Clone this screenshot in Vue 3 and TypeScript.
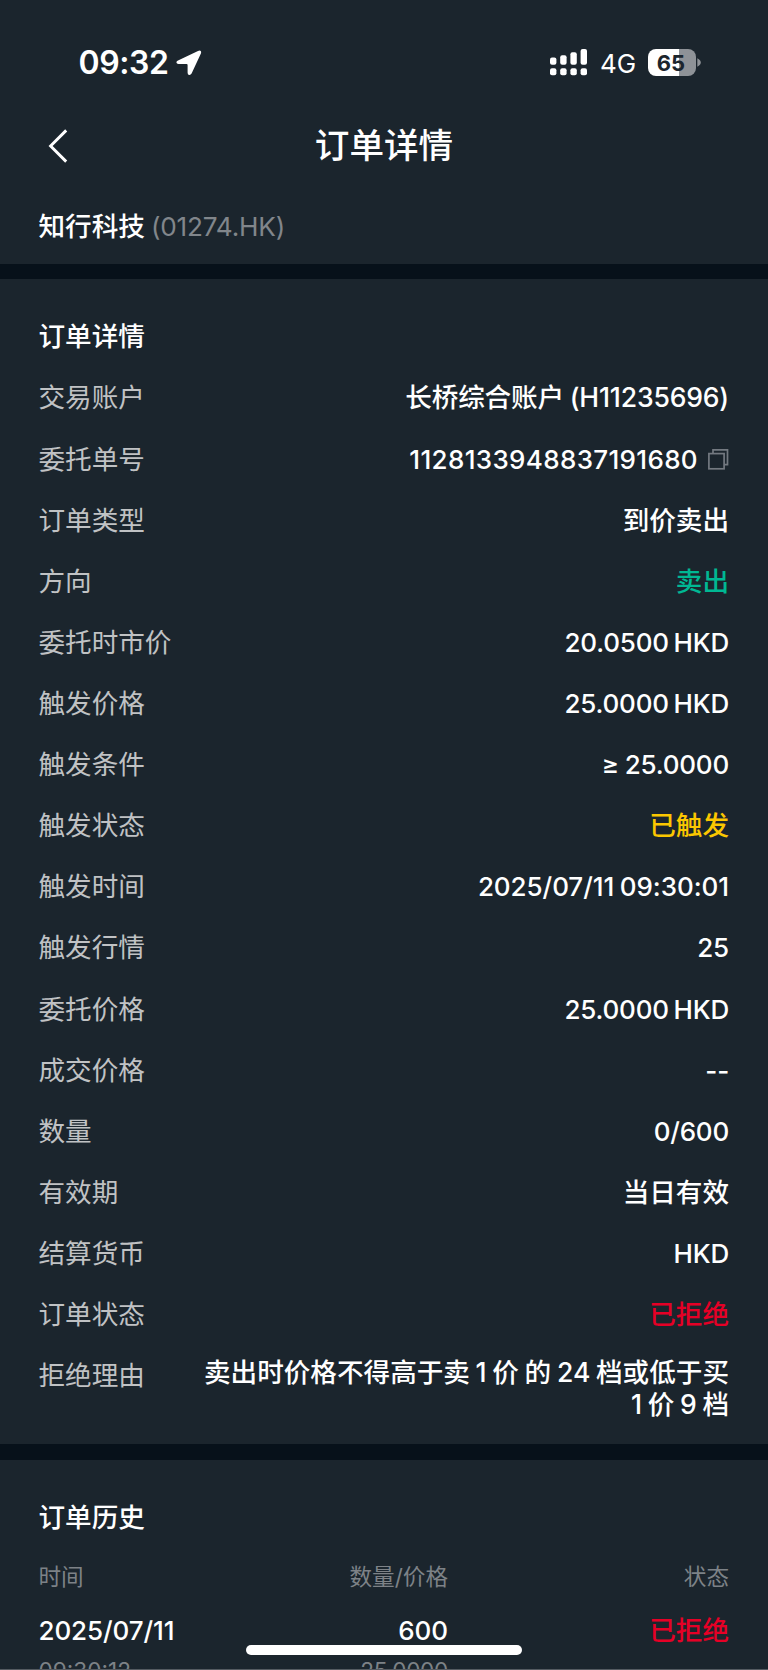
<script setup lang="ts">
interface Row {
  label: string
  value: string
  tone?: string
  kind?: string
  copy?: boolean
}

const rows: Row[] = [
  { label: '交易账户', value: '长桥综合账户 (H11235696)', kind: 'account' },
  { label: '委托单号', value: '1128133948837191680', kind: 'serial', copy: true },
  { label: '订单类型', value: '到价卖出', kind: 'han' },
  { label: '方向', value: '卖出', tone: 'green', kind: 'han' },
  { label: '委托时市价', value: '20.0500 HKD', kind: 'latin' },
  { label: '触发价格', value: '25.0000 HKD', kind: 'latin' },
  { label: '触发条件', value: '≥ 25.0000', kind: 'latin condition' },
  { label: '触发状态', value: '已触发', tone: 'yellow', kind: 'han' },
  { label: '触发时间', value: '2025/07/11 09:30:01', kind: 'latin datetime' },
  { label: '触发行情', value: '25', kind: 'latin' },
  { label: '委托价格', value: '25.0000 HKD', kind: 'latin' },
  { label: '成交价格', value: '--', kind: 'latin' },
  { label: '数量', value: '0/600', kind: 'latin' },
  { label: '有效期', value: '当日有效', kind: 'han' },
  { label: '结算货币', value: 'HKD', kind: 'latin' },
  { label: '订单状态', value: '已拒绝', tone: 'red', kind: 'han' },
]

const reasonLines: string[] = ['卖出时价格不得高于卖 1 价 的 24 档或低于买', '1 价 9 档']
</script>

<template>
  <div class="screen">
    <header class="top">
      <div class="status">
        <div class="status-left">
          <span class="clock">09:32</span>
          <svg class="location" width="26" height="26" viewBox="0 0 26 26">
            <path d="M2 10.4 L22 0.9 Q26 -0.4 24.9 3.6 L15.6 23.6 Q14.6 25.3 13 25 Q11.6 24.6 11.6 22.8 V14.9 Q11.6 13.9 10.6 13.9 H2.4 Q0.6 13.8 0.4 12.4 Q0.4 11.1 2 10.4Z" fill="#fff" />
          </svg>
        </div>
        <div class="status-right">
          <svg class="signal" width="38" height="27" viewBox="0 0 38 27" fill="#fff">
            <rect x="0" y="8.4" width="6.4" height="7.4" rx="2" />
            <rect x="10.2" y="6.2" width="6.4" height="9.6" rx="2" />
            <rect x="20.4" y="3.2" width="6.4" height="12.6" rx="2" />
            <rect x="30.6" y="0" width="6.4" height="15.8" rx="2" />
            <rect x="0" y="19.2" width="6.4" height="7" rx="2" />
            <rect x="10.2" y="19.2" width="6.4" height="7" rx="2" />
            <rect x="20.4" y="19.2" width="6.4" height="7" rx="2" />
            <rect x="30.6" y="19.2" width="6.4" height="7" rx="2" />
          </svg>
          <span class="network">4G</span>
          <div class="battery"><span>65</span></div>
          <svg class="battery-cap" width="4" height="9" viewBox="0 0 4 9">
            <path d="M0.3 0.3 Q3.8 2 3.8 4.5 T0.3 8.7Z" fill="#8e9297" />
          </svg>
        </div>
      </div>
      <nav class="nav">
        <svg class="back" width="20" height="34" viewBox="0 0 20 34">
          <path d="M18.2 1.4 L2.6 17 L18.2 32.6" fill="none" stroke="#fff" stroke-width="2.9" />
        </svg>
        <h1>订单详情</h1>
      </nav>
      <div class="stock">
        <span class="stock-name">知行科技</span>
        <span class="stock-code">(01274.HK)</span>
      </div>
    </header>

    <section class="details">
      <h2>订单详情</h2>
      <div v-for="row in rows" :key="row.label" class="row">
        <span class="label">{{ row.label }}</span>
        <span class="value" :class="[row.tone, row.kind]">{{ row.value }}</span>
        <svg v-if="row.copy" class="copy" width="21" height="21" viewBox="0 0 21 21" fill="none" stroke="#737980" stroke-width="1.7">
          <rect x="0.9" y="4.6" width="15.2" height="15.2" />
          <path d="M5 4.6 V0.9 H19.5 V15.6 H16.1" />
        </svg>
      </div>
      <div class="row reason">
        <span class="label">拒绝理由</span>
        <div class="reason-text">
          <span v-for="line in reasonLines" :key="line">{{ line }}</span>
        </div>
      </div>
    </section>

    <section class="history">
      <h2>订单历史</h2>
      <div class="grid head">
        <span>时间</span><span>数量/价格</span><span>状态</span>
      </div>
      <div class="grid entry">
        <span>2025/07/11</span><span>600</span><span class="red han">已拒绝</span>
      </div>
      <div class="grid sub">
        <span>09:30:12</span><span>25.0000</span><span></span>
      </div>
      <div class="home"></div>
    </section>
  </div>
</template>

<style>
html,
body {
  margin: 0;
  background: #1b252d;
}
</style>

<style scoped>
.screen {
  width: 768px;
  height: 1670px;
  overflow: hidden;
  box-sizing: border-box;
  border-bottom: 1px solid #555b61;
  background: #1b252d;
  color: #fff;
  font-family: Inter, "Noto Sans CJK SC", sans-serif;
  font-size: 26.6px;
  white-space: nowrap;
}
h1,
h2 {
  margin: 0;
  font-weight: 500;
}
.top {
  height: 264px;
  border-bottom: 15px solid #07111a;
}
.status {
  display: flex;
  justify-content: space-between;
  height: 108px;
  padding: 17px 67px 0 78.5px;
  box-sizing: border-box;
}
.status-left,
.status-right {
  display: flex;
  align-items: center;
}
.clock {
  width: 90.5px;
  font-size: 32px;
  font-weight: 600;
  letter-spacing: -0.4px;
}
.location {
  margin-left: 7px;
}
.network {
  width: 36px;
  margin: 1px 12px 0 12px;
  font-size: 26px;
}
.battery {
  display: flex;
  align-items: center;
  justify-content: center;
  width: 48px;
  height: 27px;
  border-radius: 8px;
  background: linear-gradient(90deg, #fff 65%, #8e9297 65%);
  color: #1b252d;
  font-size: 22px;
  font-weight: 700;
}
.battery span {
  margin-right: 2px;
}
.battery-cap {
  margin-left: 1px;
}
.nav {
  display: grid;
  grid-template-columns: 48px 1fr 48px;
  align-items: center;
  height: 74px;
  padding: 0 48px;
}
.back {
  margin-top: 1px;
}
h1 {
  grid-column: 2;
  text-align: center;
  font-size: 34.6px;
  line-height: 74px;
}
.stock {
  display: flex;
  align-items: center;
  gap: 6px;
  height: 88px;
  padding-left: 38.5px;
}
.stock-name {
  padding-bottom: 4px;
  font-weight: 500;
}
.stock-code {
  color: #81868b;
  font-size: 26.2px;
  letter-spacing: -0.2px;
}
.details {
  height: 1165px;
  padding: 27px 39px 0 38.5px;
  box-sizing: border-box;
}
h2 {
  height: 61.4px;
  line-height: 60.4px;
  font-size: 26.6px;
}
.row {
  display: flex;
  align-items: center;
  height: 61.12px;
}
.label {
  flex: 1;
  padding-bottom: 4px;
  color: #c0c2c4;
}
.value,
.reason-text {
  font-weight: 450;
}
.value.han,
.account {
  padding-bottom: 4px;
}
.account {
  word-spacing: -1px;
  letter-spacing: -0.18px;
}
.serial {
  font-size: 26px;
  letter-spacing: 0.34px;
}
.latin {
  font-size: 26px;
  letter-spacing: -0.2px;
  word-spacing: -2px;
}
.condition {
  word-spacing: -1px;
}
.datetime {
  letter-spacing: -0.05px;
  word-spacing: -1.3px;
}
.copy {
  margin-left: 10px;
}
.green {
  color: #00b893;
}
.yellow {
  color: #fbc700;
}
.red {
  color: #e60026;
}
.reason-text {
  display: flex;
  flex-direction: column;
  align-items: flex-end;
  line-height: 32px;
  padding-top: 25px;
  word-spacing: -1.4px;
}
.history {
  position: relative;
  height: 300px;
  padding: 27px 39px 0 38.5px;
  border-top: 16px solid #07111a;
}
.grid {
  display: grid;
  grid-template-columns: 204.5px 205px 1fr;
  align-items: center;
}
.grid span {
  text-align: right;
}
.grid span:first-child {
  text-align: left;
}
.head {
  height: 54px;
  padding-bottom: 4px;
  color: #7d8287;
  font-size: 22.6px;
}
.entry {
  height: 48px;
  font-size: 26px;
  font-weight: 450;
  letter-spacing: -0.1px;
}
.entry .han {
  padding-bottom: 4px;
  font-size: 26.6px;
  letter-spacing: 0;
}
.sub {
  height: 32px;
  color: #7d8287;
  font-size: 22.6px;
}
.sub span:nth-child(2) {
  letter-spacing: -0.3px;
}
.home {
  position: absolute;
  left: 246px;
  top: 185px;
  width: 276px;
  height: 10px;
  border-radius: 5px;
  background: #fff;
}
</style>
